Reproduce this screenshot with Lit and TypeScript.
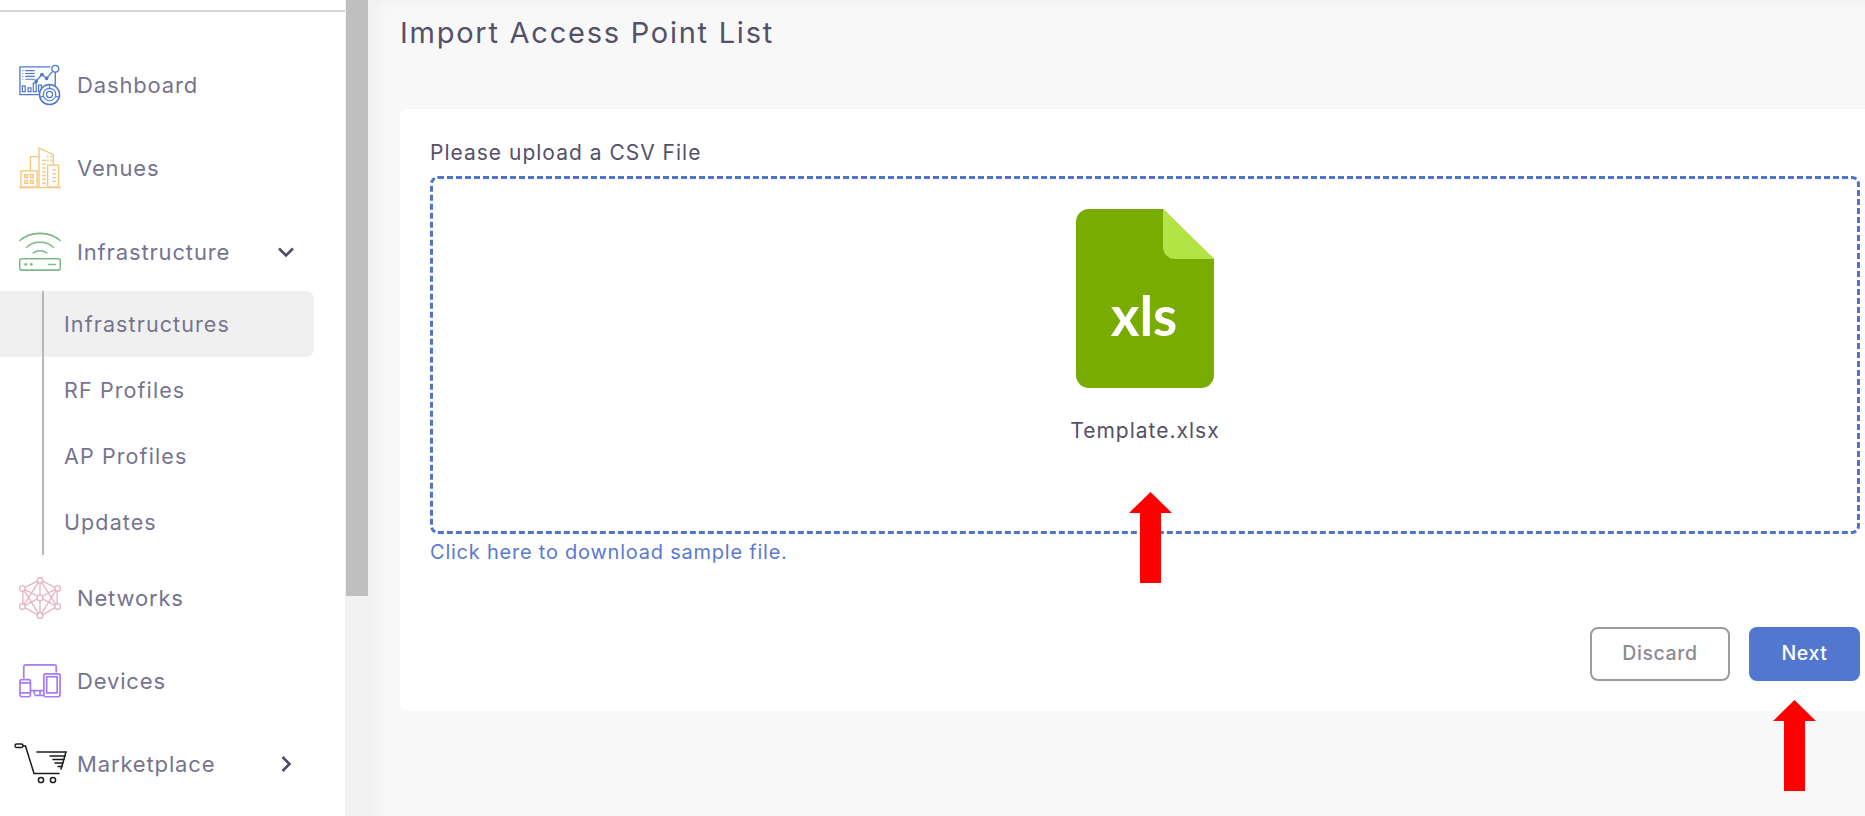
import { LitElement, html, css, svg } from "lit";
import { customElement } from "lit/decorators.js";

const icons = {
  dashboard: svg`<svg class="ic" viewBox="0 0 44 44" fill="none" stroke="#4f79d4" stroke-width="1.3">
    <path d="M38 9V24M28 32H1V3H33" stroke-width="1.4"/>
    <circle cx="38" cy="5" r="3.6" fill="#fff" stroke-width="1.4"/>
    <path d="M3.5 7h1M3.5 10h1M3.5 13h1M3.5 16h1" stroke-width="1.2"/>
    <path d="M6.5 7h10M6.5 10h10M6.5 13h10M6.5 16h10" stroke-width="1.2"/>
    <path d="M18 18l6-7 5 4 6-7" stroke-width="1.4"/>
    <circle cx="18" cy="18" r="1.3" fill="#4f79d4"/><circle cx="24" cy="11" r="1.3" fill="#4f79d4"/><circle cx="29" cy="15" r="1.3" fill="#4f79d4"/>
    <rect x="3.5" y="23" width="3" height="6"/><rect x="9.5" y="25" width="3" height="4"/><rect x="15" y="20" width="3" height="9"/><rect x="20.5" y="22" width="3" height="7"/>
    <circle cx="32" cy="32" r="10.5" fill="#fff" stroke-width="1.6"/><circle cx="32" cy="32" r="6.5"/><circle cx="32" cy="32" r="3.2"/>
    <path d="M32 21.5v4M22 35l4-1.5M42 35l-4-1.5"/>
  </svg>`,
  venues: svg`<svg class="ic" viewBox="0 0 44 44" fill="none" stroke="#f6c678" stroke-width="1.4">
    <path d="M0 42.500H44"/>
    <rect x="2" y="25" width="17" height="17"/>
    <path d="M12 25V10H21M21 42V1L36 8V18"/>
    <rect x="30" y="19" width="11.500" height="23"/>
    <rect x="6" y="29" width="3" height="3"/><rect x="12" y="29" width="3" height="3"/><rect x="6" y="35" width="3" height="3"/><rect x="12" y="35" width="3" height="3"/>
    <path d="M24 14h4M24 18h4M24 22h4M24 26h4M24 30h4M24 34h4M24 38h4M35 24h4M35 28h4M35 32h4M35 36h4"/>
    <path d="M29 10h2M33 10h2M29 14h2M33 14h2" stroke-width="1.600"/>
  </svg>`,
  infra: svg`<svg class="ic" viewBox="0 0 44 44" fill="none" stroke="#7cb98a" stroke-width="1.600" stroke-linecap="round">
    <path d="M1 10C12 0 32 0 43 10"/><path d="M8 17C15 10 29 10 36 17"/><path d="M15 23C19 20 25 20 29 23"/>
    <rect x="0.800" y="29" width="42.400" height="12" rx="2"/>
    <circle cx="7" cy="35" r="1.500" fill="#7cb98a" stroke="none"/><circle cx="13" cy="35" r="1.500" fill="#7cb98a" stroke="none"/>
    <path d="M31 35h7"/>
  </svg>`,
  networks: svg`<svg class="ic" viewBox="0 0 44 44" fill="none" stroke="#e6b6c8" stroke-width="1.500">
    <path d="M22 3L40 12V31L22 41L4 31V12Z"/><path d="M22 3V41M4 12L40 31M40 12L4 31M4 12L22 41L40 12M4 31L22 3L40 31"/>
    <g fill="#fff"><circle cx="22" cy="3.500" r="3"/><circle cx="40.500" cy="12" r="3"/><circle cx="40.500" cy="31" r="3"/><circle cx="22" cy="40.500" r="3"/><circle cx="3.500" cy="31" r="3"/><circle cx="3.500" cy="12" r="3"/><circle cx="22" cy="22" r="3"/></g>
  </svg>`,
  devices: svg`<svg class="ic" viewBox="0 0 44 36" fill="none" stroke="#a47cf5" stroke-width="1.800">
    <path d="M5 15V3a2 2 0 0 1 2-2H37a2 2 0 0 1 2 2V9"/>
    <path d="M12 28H26M16 28v4M22 28v4M16 33H26"/>
    <rect x="1" y="16.500" width="11" height="18" rx="2"/><path d="M1 30.500H12M1 20H12"/>
    <rect x="26" y="10.500" width="17" height="24" rx="2"/><rect x="29" y="13.500" width="11" height="17"/>
  </svg>`,
  cart: svg`<svg class="cart" viewBox="0 0 54 42" fill="none" stroke="#1b1b1b" stroke-width="1.500" stroke-linecap="round">
    <rect x="1" y="1" width="8" height="3.500" rx="1.700" stroke-width="1.500"/>
    <path d="M9 3H11.500L20 30.500H45"/>
    <path d="M23 9H52L47 26"/>
    <path d="M36 13H51M39 16.500H50M41 20H49M44 23.500H48"/>
    <circle cx="27" cy="37" r="2.600"/><circle cx="39" cy="37" r="2.600"/>
  </svg>`,
};

const arrow = svg`<svg viewBox="0 0 43 91" width="43" height="91"><path fill="#ff0000" d="M21.500 0L43 21H32V91H11V21H0Z"/></svg>`;

@customElement("app-root")
export class AppRoot extends LitElement {
  static styles = css`
    :host { display: block; width: 1865px; height: 816px; overflow: hidden; position: relative;
      font-family: "Inter", "Noto Sans", sans-serif; color: #55506a; }
    .page { display: flex; height: 816px; }

    .side { width: 345px; flex: none; background: #fff; color: #75748f; font-size: 22px; letter-spacing: 0.850px; }
    .top { height: 10px; border-bottom: 2px solid #d6d6d6; margin-bottom: 31px; }
    .item { height: 83px; display: flex; align-items: center; padding-left: 19px; box-sizing: border-box; }
    .item.infra { height: 82px; padding-top: 3px; }
    .iconbox { width: 42px; flex: none; display: flex; justify-content: center; margin-right: 16px; }
    .ic { width: 42px; height: 42px; flex: none; }
    .cart { width: 54px; height: 42px; flex: none; margin-left: -5px; margin-right: -7px; }
    .label { flex: 1; }
    .chev { width: 18px; height: 18px; margin-right: 50px; flex: none; }
    .sub { margin-bottom: 1px; border-left: 2px solid #b7b7b7; margin-left: 42px; position: relative; }
    .sub div { height: 66px; display: flex; align-items: center; padding-left: 20px; font-size: 21.500px; letter-spacing: 1.100px; }
    .sub .active { background: #f0f0f0; width: 250px; border-radius: 0 8px 8px 0; position: relative; }
    .sub .active::before { content: ""; position: absolute; left: -44px; top: 0; bottom: 0; width: 42px; background: #f0f0f0; }

    .scroll { width: 24px; flex: none; background: #f1f1f1; }
    .thumb { height: 596px; width: 22px; margin-left: 1px; background: #bfbfbf; }

    .main { flex: 1; background: #f8f8f8; padding: 14px 0 0 31px; box-shadow: inset 18px 10px 14px -10px #f0f0f0; }
    h1 { margin: 0 0 59px; font-size: 29px; font-weight: 400; line-height: 38px; height: 36px; color: #55506a; letter-spacing: 1.750px; }
    .card { background: #fff; border-radius: 8px 0 0 8px; height: 602px; padding: 32px 5px 0 30px; box-sizing: border-box; }
    .lbl { font-size: 21px; line-height: 24px; height: 35px; font-weight: 400; color: #55506a; letter-spacing: 1px; }
    .drop { height: 358px; border: 3px dashed #4f74cc; border-radius: 8px; box-sizing: border-box; display: flex; flex-direction: column; align-items: center; padding-top: 30px; }
    .file { width: 138px; height: 179px; flex: none; }
    .fname { font-size: 21px; line-height: 28px; margin-top: 29px; color: #55506a; letter-spacing: 1px; }
    .link { font-size: 20px; line-height: 26px; margin-top: 5px; color: #5a79d0; letter-spacing: 0.770px; }
    .btns { display: flex; justify-content: flex-end; gap: 19px; margin-top: 62px; }
    button { height: 54px; font: 500 19.500px "Inter", "Noto Sans", sans-serif; letter-spacing: 0.600px; border-radius: 8px; box-sizing: border-box; padding: 0 0 3px; }
    .discard { width: 140px; background: #fff; border: 2px solid #9b9b9f; color: #8b8b93; }
    .next { width: 111px; background: #5277cf; border: none; color: #fff; }
    .arrow { position: absolute; display: block; width: 43px; height: 91px; }
    .a1 { left: 1129px; top: 492px; }
    .a2 { left: 1773px; top: 700px; }
  `;

  private chevDown = svg`<svg class="chev" viewBox="0 0 18 18" fill="none" stroke="#4f4b68" stroke-width="2.600"><path d="M2 5.500L9 12.500L16 5.500"/></svg>`;
  private chevRight = svg`<svg class="chev" viewBox="0 0 18 18" fill="none" stroke="#4f4b68" stroke-width="2.600"><path d="M5.500 2L12.500 9L5.500 16"/></svg>`;

  render() {
    return html`
      <div class="page">
        <aside class="side">
          <div class="top"></div>
          <div class="item"><span class="iconbox">${icons.dashboard}</span><span class="label">Dashboard</span></div>
          <div class="item"><span class="iconbox">${icons.venues}</span><span class="label">Venues</span></div>
          <div class="item infra"><span class="iconbox">${icons.infra}</span><span class="label">Infrastructure</span>${this.chevDown}</div>
          <div class="sub">
            <div class="active">Infrastructures</div>
            <div>RF Profiles</div>
            <div>AP Profiles</div>
            <div>Updates</div>
          </div>
          <div class="item"><span class="iconbox">${icons.networks}</span><span class="label">Networks</span></div>
          <div class="item"><span class="iconbox">${icons.devices}</span><span class="label">Devices</span></div>
          <div class="item"><span class="iconbox">${icons.cart}</span><span class="label">Marketplace</span>${this.chevRight}</div>
        </aside>
        <div class="scroll"><div class="thumb"></div></div>
        <main class="main">
          <h1>Import Access Point List</h1>
          <section class="card">
            <div class="lbl">Please upload a CSV File</div>
            <div class="drop">
              <svg class="file" viewBox="0 0 138 179">
                <path fill="#78ac00" d="M13 0H87L138 50V166a13 13 0 0 1-13 13H13a13 13 0 0 1-13-13V13A13 13 0 0 1 13 0Z"/>
                <path fill="#b2e445" d="M87 0L138 50H99a12 12 0 0 1-12-12Z"/>
                <text x="68" y="127" text-anchor="middle" fill="#fff" font-family="Lato, 'Noto Sans', sans-serif" font-weight="700" font-size="55">xls</text>
              </svg>
              <div class="fname">Template.xlsx</div>
            </div>
            <div class="link">Click here to download sample file.</div>
            <div class="btns">
              <button class="discard">Discard</button>
              <button class="next">Next</button>
            </div>
          </section>
        </main>
      </div>
      <span class="arrow a1">${arrow}</span>
      <span class="arrow a2">${arrow}</span>
    `;
  }
}
